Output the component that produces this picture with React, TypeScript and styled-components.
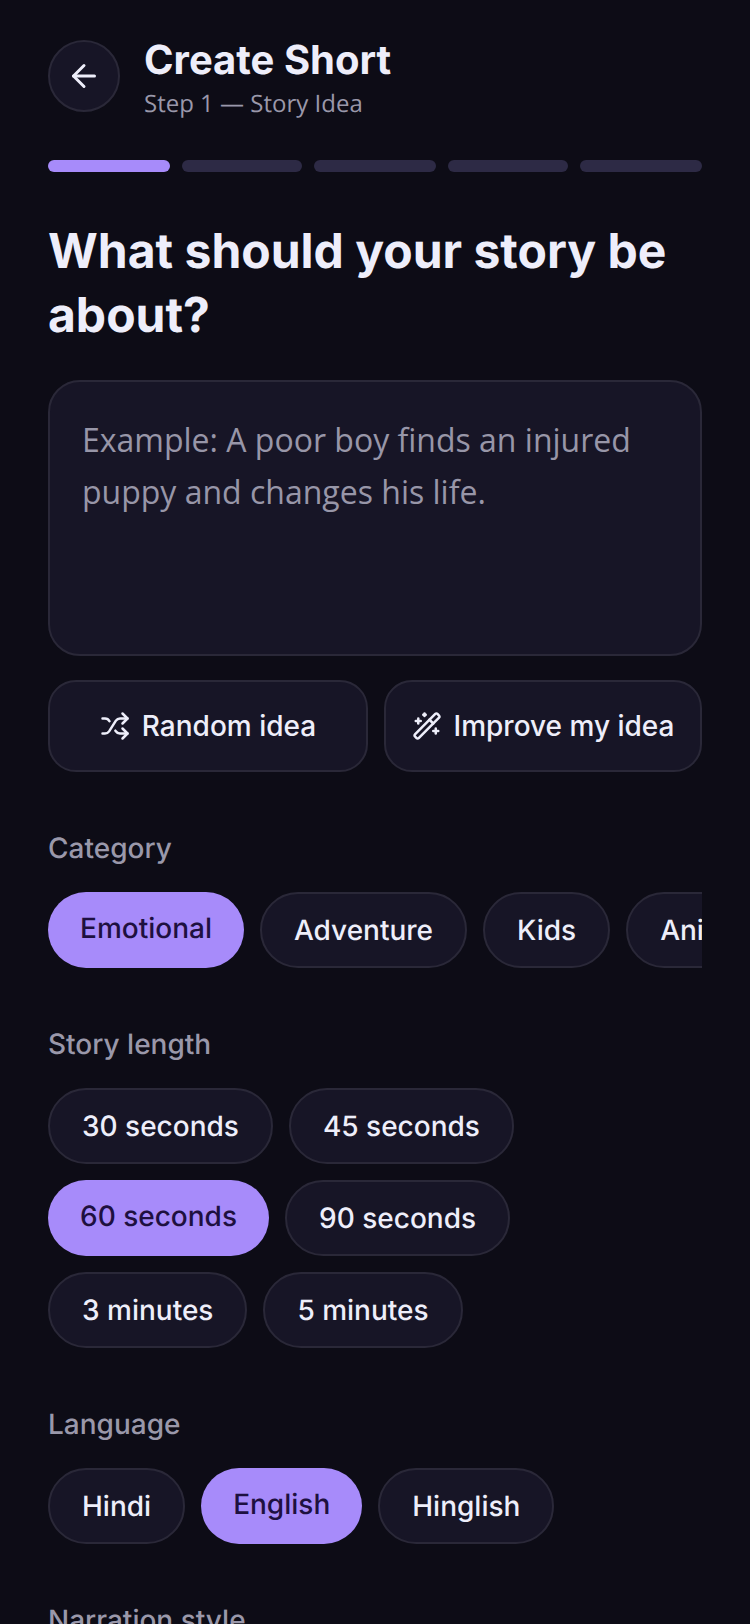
import React from 'react';
import styled, { createGlobalStyle } from 'styled-components';
import { ArrowLeft, Shuffle, WandSparkles } from 'lucide-react';

const GlobalStyle = createGlobalStyle`
  html, body {
    margin: 0;
    padding: 0;
    height: 100%;
    background: #0d0c16;
    overflow: hidden;
    text-rendering: geometricPrecision;
  }
  * { box-sizing: border-box; }
`;

const Screen = styled.div`
  width: 750px;
  height: 1624px;
  padding: 40px 48px 0;
  background: #0d0c16;
  overflow: hidden;
  font-family: Inter, "Liberation Sans", sans-serif;
  color: #eeeefa;
`;

const Header = styled.div`
  display: flex;
  align-items: flex-start;
  gap: 24px;
  height: 72px;
`;

const BackButton = styled.button`
  flex: none;
  width: 72px;
  height: 72px;
  border-radius: 50%;
  border: 2px solid #2a2838;
  background: #171526;
  color: #eeeefa;
  display: flex;
  align-items: center;
  justify-content: center;
  padding: 0;
`;

const HeaderText = styled.div`
  display: flex;
  flex-direction: column;
  margin-top: -2px;
`;

const Title = styled.h1`
  margin: 0;
  font-size: 40px;
  line-height: 44px;
  font-weight: 700;
  color: #eeeefa;
`;

const Subtitle = styled.div`
  margin-top: 6px;
  font-family: "Open Sans", sans-serif;
  font-size: 24px;
  line-height: 32px;
  color: #9a98aa;
`;

const Progress = styled.div`
  display: flex;
  gap: 12px;
  margin-top: 48px;
`;

const ProgressStep = styled.div<{ $active?: boolean }>`
  flex: none;
  width: 120px;
  height: 12px;
  border-radius: 6px;
  background: ${p => (p.$active ? '#a78bfa' : '#2d2a45')};

  &:nth-child(odd) {
    width: 122px;
  }
`;

const Question = styled.h2`
  margin: 47px 0 0;
  font-size: 48px;
  line-height: 64px;
  font-weight: 700;
  color: #eeeefa;
`;

const IdeaInput = styled.textarea`
  display: block;
  width: 100%;
  height: 276px;
  margin-top: 33px;
  padding: 32px;
  border-radius: 32px;
  border: 2px solid #2a2838;
  background: #171526;
  color: #eeeefa;
  resize: none;
  outline: none;
  font-family: "Open Sans", sans-serif;
  font-size: 32px;
  line-height: 52px;

  &::placeholder {
    color: #9896a8;
    opacity: 1;
  }
`;

const ActionRow = styled.div`
  display: flex;
  gap: 16px;
  margin-top: 24px;
`;

const ActionButton = styled.button`
  flex: 1;
  height: 92px;
  display: flex;
  align-items: center;
  justify-content: center;
  gap: 12px;
  padding: 0;
  border-radius: 28px;
  border: 2px solid #2a2838;
  background: #171526;
  color: #eeeefa;
  font-family: Inter, sans-serif;
  font-size: 28px;
  font-weight: 500;
  white-space: nowrap;

  &:first-child {
    flex: 0 0 320px;
  }
`;

const Section = styled.section`
  margin-top: 56px;
`;

const SectionLabel = styled.div`
  font-size: 28px;
  line-height: 40px;
  font-weight: 500;
  color: #9a98aa;
`;

const ChipScroller = styled.div`
  display: flex;
  gap: 16px;
  margin-top: 24px;
  overflow: hidden;
`;

const ChipWrap = styled.div`
  display: flex;
  flex-wrap: wrap;
  gap: 16px;
  margin-top: 24px;
`;

// selected chips drop the border, so their text sits 2px higher in a stretched row
const Chip = styled.div<{ $selected?: boolean }>`
  flex-shrink: 0;
  padding: 18px 32px;
  border-radius: 38px;
  border: ${p => (p.$selected ? '0' : '2px solid #2a2838')};
  background: ${p => (p.$selected ? '#a78bfa' : '#171526')};
  color: ${p => (p.$selected ? '#1e1040' : '#eeeefa')};
  font-size: 28px;
  line-height: 36px;
  font-weight: 500;
  white-space: nowrap;
`;

const categories = ['Emotional', 'Adventure', 'Kids', 'Animals'];
const lengths = ['30 seconds', '45 seconds', '60 seconds', '90 seconds', '3 minutes', '5 minutes'];
const languages = ['Hindi', 'English', 'Hinglish'];

export default function App() {
  return (
    <Screen>
      <GlobalStyle />
      <Header>
        <BackButton aria-label="Back">
          <ArrowLeft size={36} strokeWidth={2} />
        </BackButton>
        <HeaderText>
          <Title>Create Short</Title>
          <Subtitle>Step 1 — Story Idea</Subtitle>
        </HeaderText>
      </Header>

      <Progress>
        {[0, 1, 2, 3, 4].map(i => (
          <ProgressStep key={i} $active={i === 0} />
        ))}
      </Progress>

      <Question>What should your story be about?</Question>

      <IdeaInput placeholder="Example: A poor boy finds an injured puppy and changes his life." />

      <ActionRow>
        <ActionButton>
          <Shuffle size={30} strokeWidth={2} />
          Random idea
        </ActionButton>
        <ActionButton>
          <WandSparkles size={30} strokeWidth={2} />
          Improve my idea
        </ActionButton>
      </ActionRow>

      <Section>
        <SectionLabel>Category</SectionLabel>
        <ChipScroller>
          {categories.map(c => (
            <Chip key={c} $selected={c === 'Emotional'}>{c}</Chip>
          ))}
        </ChipScroller>
      </Section>

      <Section>
        <SectionLabel>Story length</SectionLabel>
        <ChipWrap>
          {lengths.map(l => (
            <Chip key={l} $selected={l === '60 seconds'}>{l}</Chip>
          ))}
        </ChipWrap>
      </Section>

      <Section>
        <SectionLabel>Language</SectionLabel>
        <ChipScroller>
          {languages.map(l => (
            <Chip key={l} $selected={l === 'English'}>{l}</Chip>
          ))}
        </ChipScroller>
      </Section>

      <Section>
        <SectionLabel>Narration style</SectionLabel>
      </Section>
    </Screen>
  );
}
